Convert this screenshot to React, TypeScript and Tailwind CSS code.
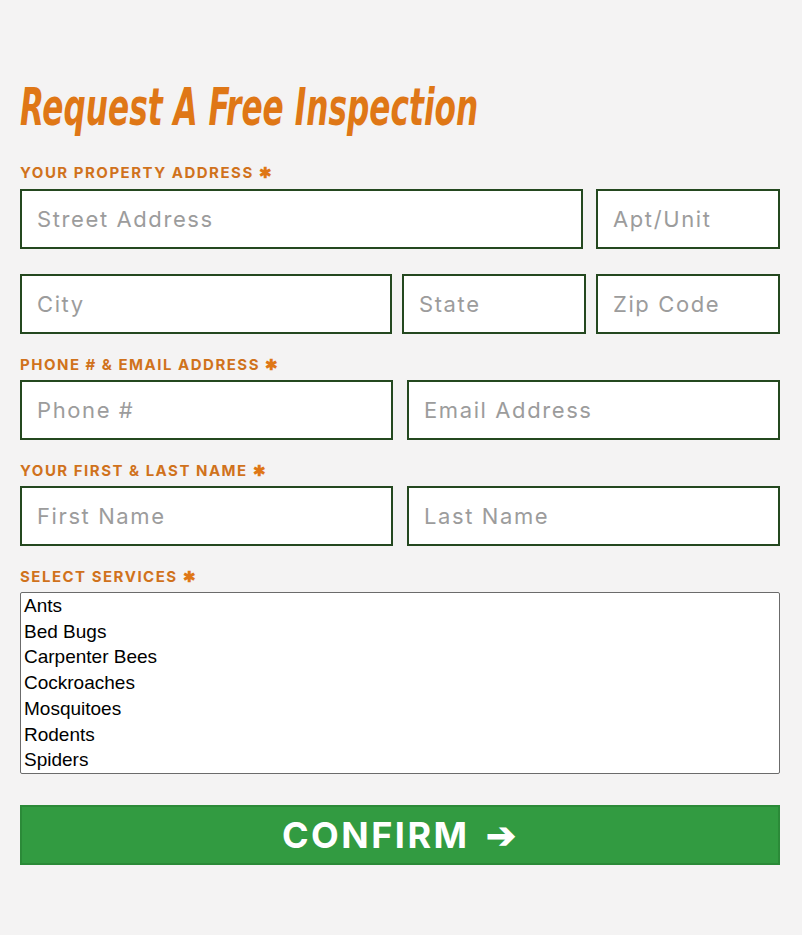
import React from 'react';

const services = ['Ants', 'Bed Bugs', 'Carpenter Bees', 'Cockroaches', 'Mosquitoes', 'Rodents', 'Spiders'];

const Label: React.FC<{ children: React.ReactNode; className?: string }> = ({ children, className = '' }) => (
  <div
    className={`text-[15px] font-bold tracking-[1.5px] uppercase text-[#d0721c] leading-none ${className}`}
    style={{ fontFamily: 'Inter, "Open Sans", sans-serif' }}
  >
    {children} <span className="text-[#df7716]">✱</span>
  </div>
);

const Field: React.FC<{ placeholder: string; className?: string }> = ({ placeholder, className = '' }) => (
  <input
    type="text"
    placeholder={placeholder}
    className={`h-[60px] min-w-0 bg-white border-2 border-[#24481f] px-[15px] text-[22px] tracking-[1.6px] text-gray-800 placeholder:text-[#9c9c9c] outline-none ${className}`}
    style={{ fontFamily: 'Inter, "Open Sans", sans-serif' }}
  />
);

const App: React.FC = () => {
  return (
    <div className="min-h-[935px] w-full bg-[#f4f3f3] pt-[82px]">
      <div className="mx-[20px] w-[760px]">
        <h1
          className="inline-block origin-left scale-x-[0.68] text-[51px] font-bold italic text-[#df7716] leading-none whitespace-nowrap"
          style={{ fontFamily: '"Liberation Sans Narrow", "DejaVu Sans Condensed", sans-serif' }}
        >
          Request A Free Inspection
        </h1>

        <Label className="mt-[32px]">Your Property Address</Label>
        <div className="mt-[9px] flex gap-[13px]">
          <Field placeholder="Street Address" className="flex-1" />
          <Field placeholder="Apt/Unit" className="w-[184px]" />
        </div>
        <div className="mt-[25px] flex gap-[10px]">
          <Field placeholder="City" className="flex-1" />
          <Field placeholder="State" className="w-[184px]" />
          <Field placeholder="Zip Code" className="w-[184px]" />
        </div>

        <Label className="mt-[23px]">Phone # &amp; Email Address</Label>
        <div className="mt-[8px] flex gap-[14px]">
          <Field placeholder="Phone #" className="flex-1" />
          <Field placeholder="Email Address" className="flex-1" />
        </div>

        <Label className="mt-[23px]">Your First &amp; Last Name</Label>
        <div className="mt-[8px] flex gap-[14px]">
          <Field placeholder="First Name" className="flex-1" />
          <Field placeholder="Last Name" className="flex-1" />
        </div>

        <Label className="mt-[23px]">Select Services</Label>
        <div
          className="mt-[8px] h-[182px] bg-white border border-[#6b6b6b] rounded-[2px] px-[3px] py-0 overflow-hidden"
          style={{ fontFamily: '"Liberation Sans", Arial, sans-serif' }}
        >
          {services.map(s => (
            <div key={s} className="text-[19px] leading-[25.7px] text-black">
              {s}
            </div>
          ))}
        </div>

        <button
          type="button"
          className="mt-[31px] w-full h-[60px] bg-[#329b41] border-2 border-[#2b8a38] text-white text-[36px] font-bold tracking-[2.5px] flex items-center justify-center gap-[16px]"
          style={{ fontFamily: 'Inter, "Open Sans", sans-serif' }}
        >
          CONFIRM <span className="text-[36px]">➔</span>
        </button>
      </div>
    </div>
  );
};

export default App;
